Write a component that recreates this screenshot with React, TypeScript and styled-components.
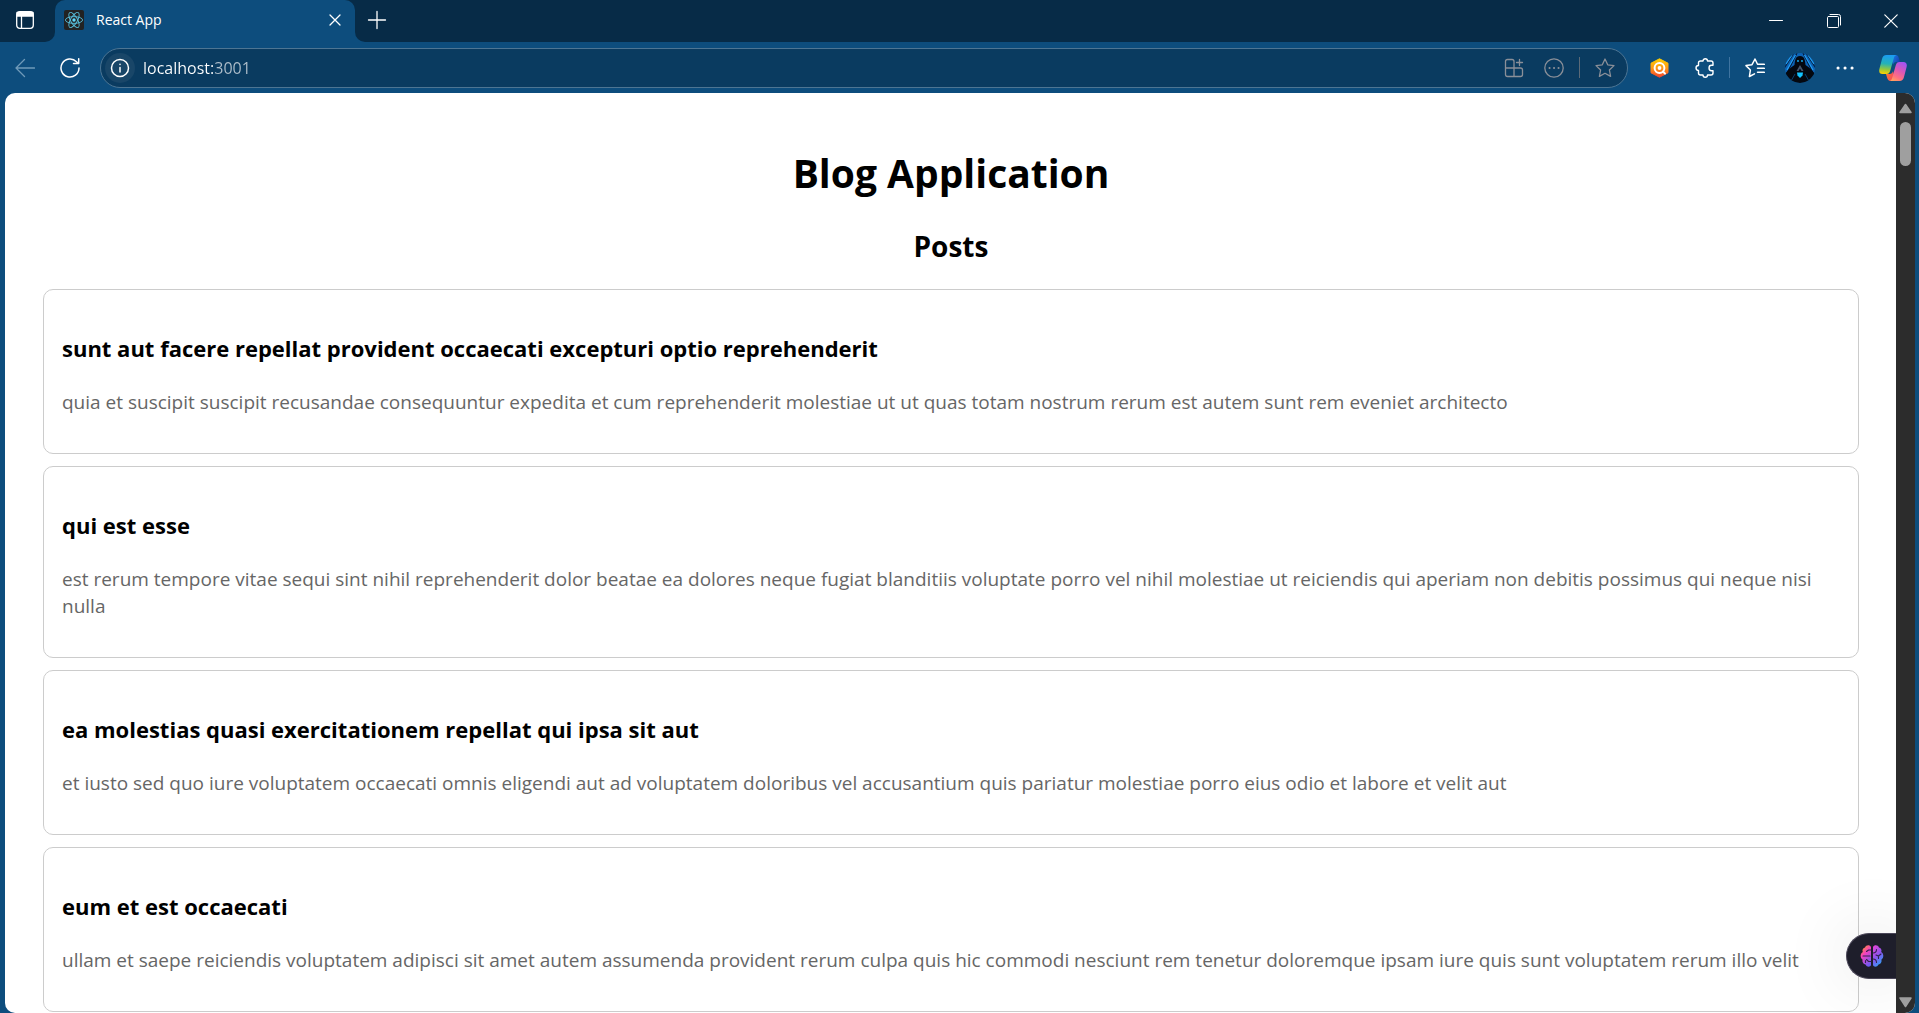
import React from "react";
import styled, { createGlobalStyle } from "styled-components";

const uiFont = `"Segoe UI", "Open Sans", "Noto Sans", sans-serif`;

const GlobalStyle = createGlobalStyle`
  *, *::before, *::after { box-sizing: border-box; }
  body { margin: 0; background: #0d4d7d; font-family: ${uiFont}; }
`;

const Window = styled.div`
  display: flex;
  flex-direction: column;
  height: 100vh;
  overflow: hidden;
  background: #0d4d7d;
  color: #fff;
`;

const TitleBar = styled.header`
  display: flex;
  flex: none;
  height: 42px;
  background: #072b47;
`;

const IconButton = styled.button<{ $width?: number; $color?: string }>`
  display: flex;
  flex: none;
  align-items: center;
  justify-content: center;
  width: ${(p) => p.$width ?? 45}px;
  height: 40px;
  padding: 0;
  border: 0;
  background: transparent;
  color: ${(p) => p.$color ?? "#fff"};
`;

const WorkspaceCorner = styled.div`
  flex: none;
  width: 55px;
  padding-right: 5px;
  background: #072b47;
  border-bottom-right-radius: 10px;
`;

const TabStrip = styled.div`
  display: flex;
  background: #0d4d7d;
`;

const Tab = styled.div`
  display: flex;
  align-items: center;
  width: 300px;
  padding: 0 0 2px 9px;
  background: #0d4d7d;
  border-radius: 10px 10px 0 0;
`;

const TabShoulder = styled.div`
  display: flex;
  background: linear-gradient(#072b47 50%, #0d4d7d 50%);
`;

const TabTitle = styled.span`
  flex: 1;
  margin-left: 12px;
  font-size: 14px;
  line-height: 20px;
`;

const TabRest = styled.div`
  display: flex;
  flex: 1;
  justify-content: space-between;
  background: #072b47;
  border-bottom-left-radius: 10px;
`;

const TabRestBack = styled.div`
  display: flex;
  flex: 1;
  background: linear-gradient(#072b47 50%, #0d4d7d 50%);
`;

const WindowControls = styled.div`
  display: flex;
  align-items: center;
`;

const Toolbar = styled.nav`
  display: flex;
  flex: none;
  align-items: center;
  height: 51px;
  padding-left: 2px;
`;

const AddressBar = styled.form`
  display: flex;
  flex: 1;
  align-items: center;
  height: 40px;
  margin: 0 9px 0 8px;
  padding: 0 2px 0 4px;
  border: 1px solid #4d7593;
  border-radius: 20px;
  background: #0a3b60;
`;

const SiteInfo = styled.button`
  display: flex;
  align-items: center;
  justify-content: center;
  width: 30px;
  height: 30px;
  padding: 0;
  border: 0;
  border-radius: 50%;
  background: #194668;
  color: #fff;
`;

const AddressInput = styled.input`
  flex: 1;
  min-width: 0;
  height: 30px;
  margin-left: 8px;
  padding: 0;
  border: 0;
  outline: 0;
  background: linear-gradient(90deg, #fff 71px, #b0bfcb 71px) text;
  -webkit-text-fill-color: transparent;
  font: 16px/30px ${uiFont};
`;

const Divider = styled.span<{ $space: number; $color: string }>`
  flex: none;
  width: 1px;
  height: 21px;
  margin: 0 ${(p) => p.$space}px;
  background: ${(p) => p.$color};
`;

const PageFrame = styled.div`
  display: flex;
  flex: 1;
  min-height: 0;
  margin: 0 4px 0 5px;
  border-radius: 10px;
  overflow: hidden;
  background: #fff;
`;

const Page = styled.main`
  position: relative;
  flex: 1;
  min-width: 0;
  padding: 53px 37px 0 38px;
  overflow: hidden;
  color: #000;
`;

const PageTitle = styled.h1`
  margin: 0 0 27px;
  font-size: 39px;
  line-height: 53px;
  text-align: center;
`;

const SectionTitle = styled.h2`
  margin: 0 0 23px;
  font-size: 28px;
  line-height: 40px;
  text-align: center;
`;

const PostList = styled.section`
  display: flex;
  flex-direction: column;
  gap: 12px;
`;

const PostCard = styled.article`
  padding: 43px 18px 37px;
  border: 1px solid #ccc;
  border-radius: 10px;
`;

const PostTitle = styled.h3`
  margin: 0 0 25px;
  font-size: 22px;
  line-height: 31px;
`;

const PostBody = styled.p`
  margin: 0;
  color: #666;
  font-size: 19px;
  line-height: 27px;
`;

const AssistantButton = styled.button`
  position: absolute;
  right: 0;
  bottom: 34px;
  display: flex;
  align-items: center;
  width: 50px;
  height: 46px;
  padding: 0 0 0 13px;
  border: 1px solid #4a4658;
  border-right: 0;
  border-radius: 23px 0 0 23px;
  background: #1e1e2b;
  box-shadow: 0 0 70px rgba(0, 0, 0, 0.14);
`;

const ScrollTrack = styled.div`
  display: flex;
  flex: none;
  flex-direction: column;
  align-items: center;
  width: 19px;
  padding: 10px 0 5px;
  background: #2c2c2c;
`;

const ScrollArrow = styled.button`
  display: flex;
  padding: 0;
  border: 0;
  background: transparent;
`;

const ScrollThumb = styled.div`
  width: 11px;
  height: 44px;
  margin: 8px 0 auto;
  border-radius: 6px;
  background: #9f9f9f;
`;

type StrokeIconProps = {
  size?: number;
  width?: number;
  children: React.ReactNode;
};

function StrokeIcon({ size = 20, width = 1.3, children }: StrokeIconProps) {
  return (
    <svg
      width={size}
      height={size}
      viewBox={`0 0 ${size} ${size}`}
      fill="none"
      stroke="currentColor"
      strokeWidth={width}
      strokeLinecap="round"
      strokeLinejoin="round"
      aria-hidden="true"
    >
      {children}
    </svg>
  );
}

const starPath =
  "M10 1 L12.7 6.8 L19 7.6 L14.4 12 L15.6 18.4 L10 15.3 L4.4 18.4 L5.6 12 L1 7.6 L7.3 6.8 Z";

function ReactFavicon() {
  return (
    <svg width="20" height="20" viewBox="0 0 20 20" fill="none" aria-hidden="true">
      <rect width="20" height="20" rx="2" fill="#222" />
      <g stroke="#61dafb" strokeWidth="0.9" opacity="0.85">
        <ellipse cx="10" cy="10" rx="8.6" ry="3.4" />
        <ellipse cx="10" cy="10" rx="8.6" ry="3.4" transform="rotate(60 10 10)" />
        <ellipse cx="10" cy="10" rx="8.6" ry="3.4" transform="rotate(120 10 10)" />
      </g>
      <circle cx="10" cy="10" r="1.7" fill="#61dafb" />
    </svg>
  );
}

function SearchExtensionIcon() {
  return (
    <svg width="20" height="20" viewBox="0 0 20 20" fill="none" aria-hidden="true">
      <defs>
        <linearGradient id="hex" x1="0" y1="0" x2="0" y2="1">
          <stop offset="0" stopColor="#ffcf00" />
          <stop offset="0.5" stopColor="#ff9a16" />
          <stop offset="1" stopColor="#f4442e" />
        </linearGradient>
      </defs>
      <path d="M9.5 0.8 L18 5.2 V14.8 L9.5 19.2 L1 14.8 V5.2 Z" fill="url(#hex)" stroke="url(#hex)" strokeLinejoin="round" />
      <circle cx="9.5" cy="10" r="4.9" stroke="#fff" strokeWidth="2" />
      <circle cx="9.5" cy="10" r="1.9" fill="#fff" />
      <path d="M13 13.5 L15 15.6" stroke="#fff" strokeWidth="2" strokeLinecap="round" />
    </svg>
  );
}

function Avatar() {
  return (
    <svg width="30" height="30" viewBox="0 0 30 30" aria-hidden="true">
      <defs>
        <clipPath id="face"><circle cx="15" cy="15" r="15" /></clipPath>
      </defs>
      <g clipPath="url(#face)">
        <rect width="30" height="30" fill="#0d62b4" />
        <g stroke="#061a35" strokeWidth="1.2">
          <path d="M9 0 L-2 17 M12 0 L0 24 M5 0 L-2 10 M21 0 L32 17 M18 0 L30 24 M25 0 L32 10" />
        </g>
        <g stroke="#22a0f5" strokeWidth="1.2">
          <path d="M10.5 2 L2 17 M19.5 2 L28 17 M7 2 L1 11 M23 2 L29 11" />
        </g>
        <path d="M15 3 C10.5 3 10 7 9.5 12 C6 14 3 17 0 21 L3 30 H27 L30 21 C27 17 24 14 20.5 12 C20 7 19.5 3 15 3 Z" fill="#04080f" />
        <circle cx="13" cy="8" r="0.9" fill="#19b8ff" />
        <circle cx="17" cy="8" r="0.9" fill="#19b8ff" />
        <path d="M15 12 L11.5 18 L13.5 18 L15 15.5 L16.5 18 L18.5 18 Z" fill="#46546a" />
        <path d="M12 19.5 H18 L17.5 22.5 L15 25 L12.5 22.5 Z" fill="#12c4ff" />
        <path d="M10 21 L6 28 M20 21 L24 28" stroke="#0b4a85" strokeWidth="0.8" />
      </g>
    </svg>
  );
}

function CopilotIcon() {
  return (
    <svg width="28" height="28" viewBox="0 0 28 28" aria-hidden="true">
      <defs>
        <linearGradient id="cpLeft" x1="0.4" y1="0" x2="0.3" y2="1">
          <stop offset="0" stopColor="#1b9cf2" />
          <stop offset="0.45" stopColor="#24b2b8" />
          <stop offset="0.75" stopColor="#93c83e" />
          <stop offset="1" stopColor="#ffd000" />
        </linearGradient>
        <linearGradient id="cpRight" x1="0.7" y1="0" x2="0.2" y2="1">
          <stop offset="0" stopColor="#a454f0" />
          <stop offset="0.4" stopColor="#d957b8" />
          <stop offset="0.75" stopColor="#ff6f80" />
          <stop offset="1" stopColor="#ffa45c" />
        </linearGradient>
        <linearGradient id="cpTop" x1="0" y1="0" x2="1" y2="0.6">
          <stop offset="0" stopColor="#1a85ec" />
          <stop offset="1" stopColor="#163fb0" />
        </linearGradient>
        <linearGradient id="cpBottom" x1="0" y1="0" x2="1" y2="0.4">
          <stop offset="0" stopColor="#ff7a30" />
          <stop offset="1" stopColor="#f04a5c" />
        </linearGradient>
      </defs>
      <path d="M12 1 H16.5 C18.5 1 19.3 2.2 19.9 4.2 L21 8 H17.5 C15.5 8 14.5 9 14 11 Z" fill="url(#cpTop)" />
      <path d="M16 27 H11.5 C9.5 27 8.7 25.8 8.1 23.8 L7 20 H10.5 C12.5 20 13.5 19 14 17 Z" fill="url(#cpBottom)" />
      <path d="M7.5 1 H17.5 C16 1.3 15.3 2.6 14.8 4.3 L11.3 16.500 C10.600 18.9 9.600 20 7.5 20 H3.5 C0.8 20 -0.3 18 0.4 15 L3 5 C3.7 2.3 5 1 7.5 1 Z" fill="url(#cpLeft)" />
      <path d="M20.5 27 H10.5 C12 26.7 12.7 25.4 13.2 23.7 L16.7 11.5 C17.4 9.1 18.4 8 20.5 8 H24.5 C27.2 8 28.3 10 27.6 13 L25 23 C24.3 25.7 23 27 20.5 27 Z" fill="url(#cpRight)" />
    </svg>
  );
}

function BrainIcon() {
  return (
    <svg width="24" height="24" viewBox="0 0 24 24" fill="none" aria-hidden="true">
      <defs>
        <linearGradient id="brainLeft" x1="0.2" y1="0" x2="0.7" y2="1">
          <stop offset="0" stopColor="#ff9a1f" />
          <stop offset="0.4" stopColor="#f43fc0" />
          <stop offset="1" stopColor="#6a5cf5" />
        </linearGradient>
        <linearGradient id="brainRight" x1="0.2" y1="0" x2="0.7" y2="1">
          <stop offset="0" stopColor="#e046d8" />
          <stop offset="0.5" stopColor="#8a55ee" />
          <stop offset="1" stopColor="#23a8f8" />
        </linearGradient>
      </defs>
      <path d="M11 3 C10 0.5 6 0.5 5 3.5 C2.5 4 2 6.5 2.8 8 C0 9.5 0 14 2.5 15.5 C2 18.5 3.5 20 5.5 20.5 C7 23.5 10.5 23 11 21 Z" fill="url(#brainLeft)" />
      <path d="M13 3 C14 0.5 18 0.5 19 3.5 C21.5 4 22 6.5 21.2 8 C24 9.5 24 14 21.5 15.5 C22 18.5 20.5 20 18.5 20.5 C17 23.5 13.5 23 13 21 Z" fill="url(#brainRight)" />
      <g stroke="#33224d" strokeWidth="1.1" strokeLinecap="round">
        <path d="M11 6 H8.5 L6.5 7.5 M3 12 H10 M11 17.5 H8.5 L6.5 15.5 M5.5 18.5 V16.5" />
        <path d="M13 9 C15.5 9 16.5 7.5 16.5 5.5 M21 10 L18.5 12 L16 11 M13 15 C15.5 15 16.5 16.5 16.5 18.5 M18.5 12 V14.5" />
      </g>
    </svg>
  );
}

function Triangle({ down = false }: { down?: boolean }) {
  return (
    <svg width="13" height="11" viewBox="0 0 13 11" aria-hidden="true">
      <path
        d={down ? "M1 1 H12 L6.5 9.5 Z" : "M1 9.5 H12 L6.5 1.5 Z"}
        fill="#9f9f9f"
        stroke="#9f9f9f"
        strokeWidth="1.5"
        strokeLinejoin="round"
      />
    </svg>
  );
}

const posts = [
  {
    title: "sunt aut facere repellat provident occaecati excepturi optio reprehenderit",
    body: "quia et suscipit suscipit recusandae consequuntur expedita et cum reprehenderit molestiae ut ut quas totam nostrum rerum est autem sunt rem eveniet architecto",
  },
  {
    title: "qui est esse",
    body: "est rerum tempore vitae sequi sint nihil reprehenderit dolor beatae ea dolores neque fugiat blanditiis voluptate porro vel nihil molestiae ut reiciendis qui aperiam non debitis possimus qui neque nisi nulla",
  },
  {
    title: "ea molestias quasi exercitationem repellat qui ipsa sit aut",
    body: "et iusto sed quo iure voluptatem occaecati omnis eligendi aut ad voluptatem doloribus vel accusantium quis pariatur molestiae porro eius odio et labore et velit aut",
  },
  {
    title: "eum et est occaecati",
    body: "ullam et saepe reiciendis voluptatem adipisci sit amet autem assumenda provident rerum culpa quis hic commodi nesciunt rem tenetur doloremque ipsam iure quis sunt voluptatem rerum illo velit",
  },
];

export default function App() {
  return (
    <Window>
      <GlobalStyle />
      <TitleBar>
        <TabStrip>
          <WorkspaceCorner>
            <IconButton $width={50} aria-label="Tab actions">
              <StrokeIcon>
                <rect x="1.7" y="1.7" width="16.6" height="16.6" rx="3" />
                <path d="M2 2.5 H18 V6 H2 Z" fill="currentColor" />
                <path d="M6.5 6 V18" />
              </StrokeIcon>
            </IconButton>
          </WorkspaceCorner>
        </TabStrip>
        <TabShoulder>
          <Tab>
            <ReactFavicon />
            <TabTitle>React App</TabTitle>
            <IconButton $width={40} aria-label="Close tab">
              <StrokeIcon size={12}>
                <path d="M1 1 L11 11 M11 1 L1 11" />
              </StrokeIcon>
            </IconButton>
          </Tab>
        </TabShoulder>
        <TabRestBack>
          <TabRest>
            <IconButton $width={44} aria-label="New tab">
              <StrokeIcon>
                <path d="M10 1.5 V18.5 M1.5 10 H18.5" />
              </StrokeIcon>
            </IconButton>
            <WindowControls>
              <IconButton $width={58} aria-label="Minimize">
                <StrokeIcon size={14} width={1}>
                  <path d="M0.5 6.5 H13.5" />
                </StrokeIcon>
              </IconButton>
              <IconButton $width={58} aria-label="Restore">
                <StrokeIcon size={14} width={1}>
                  <rect x="0.5" y="2.5" width="11" height="11" rx="1" />
                  <path d="M3 0.5 H11.5 Q13.5 0.5 13.5 2.5 V11" />
                </StrokeIcon>
              </IconButton>
              <IconButton $width={56} aria-label="Close window">
                <StrokeIcon size={14} width={1.2}>
                  <path d="M0.8 0.8 L13.2 13.2 M13.2 0.8 L0.8 13.2" />
                </StrokeIcon>
              </IconButton>
            </WindowControls>
          </TabRest>
        </TabRestBack>
      </TitleBar>

      <Toolbar aria-label="Browser toolbar">
        <IconButton $color="#6f9ab9" aria-label="Back">
          <StrokeIcon>
            <path d="M19.5 10 H1 M9.5 1.5 L1 10 L9.5 18.5" />
          </StrokeIcon>
        </IconButton>
        <IconButton aria-label="Reload">
          <StrokeIcon width={1.5}>
            <path d="M19 10 A9 9 0 1 1 16.5 3.8 L18.5 5.5 M18.7 0.8 V5.6 H13.5" />
          </StrokeIcon>
        </IconButton>
        <AddressBar onSubmit={(e) => e.preventDefault()}>
          <SiteInfo type="button" aria-label="Site information">
            <StrokeIcon width={1.5}>
              <circle cx="10" cy="10" r="8.5" />
              <path d="M10 9.5 V14 M10 6.3 V6.5" />
            </StrokeIcon>
          </SiteInfo>
          <AddressInput aria-label="Address" defaultValue="localhost:3001" spellCheck={false} />
          <IconButton type="button" $width={40} $color="#8a8f98" aria-label="Install app">
            <StrokeIcon>
              <path d="M10 18.5 H3.5 Q1.5 18.5 1.5 16.5 V3.5 Q1.5 1.5 3.5 1.5 H8 Q10 1.5 10 3.5 Z M1.5 10 H16.5 Q18.5 10 18.5 12 V16.5 Q18.5 18.5 16.5 18.5 H10 M15.5 1.5 V7.5 M12.5 4.5 H18.5" />
            </StrokeIcon>
          </IconButton>
          <IconButton type="button" $width={40} $color="#8a8f98" aria-label="More page actions">
            <StrokeIcon>
              <circle cx="10" cy="10" r="9.2" />
              <path d="M5.5 10 H5.6 M10 10 H10.1 M14.5 10 H14.6" strokeWidth="2" />
            </StrokeIcon>
          </IconButton>
          <Divider $space={5} $color="#5b6a78" />
          <IconButton type="button" $width={40} $color="#8a8f98" aria-label="Add to favorites">
            <StrokeIcon>
              <path d={starPath} />
            </StrokeIcon>
          </IconButton>
        </AddressBar>
        <IconButton aria-label="Search extension">
          <SearchExtensionIcon />
        </IconButton>
        <IconButton aria-label="Extensions">
          <StrokeIcon width={1.4}>
            <path d="M5.5 3 H8 C8 0 12.5 0 12.5 3 H16 Q18 3 18 5 V7.300 H16.500 C13.2 7.300 13.2 12.700 16.500 12.700 H18 V15 Q18 17 16 17 H12.5 C12.5 20 8 20 8 17 H5.5 Q3.5 17 3.5 15 V12.5 C0.2 12.5 0.2 7.5 3.5 7.5 V5 Q3.5 3 5.5 3 Z" />
          </StrokeIcon>
        </IconButton>
        <Divider $space={2} $color="#3f74a0" />
        <IconButton aria-label="Favorites">
          <StrokeIcon width={1.5}>
            <path d="M12.5 6.3 L10 1 L7 6.7 L1 7.6 L5.4 12 L4.4 18.5 L9.5 15.8 M12.5 10.3 H19.3 M12.5 6.3 H19.3 M12.5 14.3 H19.3" />
          </StrokeIcon>
        </IconButton>
        <IconButton aria-label="Profile">
          <Avatar />
        </IconButton>
        <IconButton aria-label="Settings and more">
          <StrokeIcon width={3}>
            <path d="M3 10 H3.1 M10 10 H10.1 M17 10 H17.1" />
          </StrokeIcon>
        </IconButton>
        <IconButton $width={52} aria-label="Copilot">
          <CopilotIcon />
        </IconButton>
      </Toolbar>

      <PageFrame>
        <Page>
          <PageTitle>Blog Application</PageTitle>
          <SectionTitle>Posts</SectionTitle>
          <PostList>
            {posts.map((post) => (
              <PostCard key={post.title}>
                <PostTitle>{post.title}</PostTitle>
                <PostBody>{post.body}</PostBody>
              </PostCard>
            ))}
          </PostList>
          <AssistantButton aria-label="Open assistant">
            <BrainIcon />
          </AssistantButton>
        </Page>
        <ScrollTrack>
          <ScrollArrow aria-label="Scroll up">
            <Triangle />
          </ScrollArrow>
          <ScrollThumb />
          <ScrollArrow aria-label="Scroll down">
            <Triangle down />
          </ScrollArrow>
        </ScrollTrack>
      </PageFrame>
    </Window>
  );
}
